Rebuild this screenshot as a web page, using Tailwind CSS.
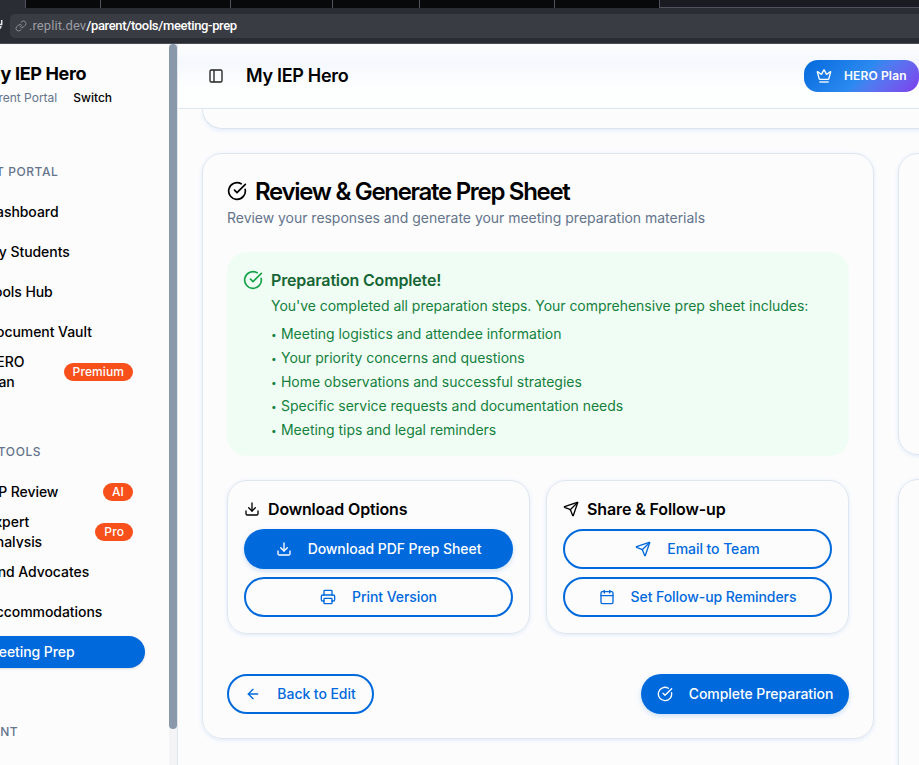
<!DOCTYPE html>
<html lang="en">
<head>
<meta charset="utf-8">
<title>My IEP Hero</title>
<script src="https://cdn.jsdelivr.net/npm/@tailwindcss/browser@4"></script>
</head>
<body class="w-[919px] h-[765px] overflow-hidden flex flex-col bg-[#fcfcfd] text-black font-['Inter',sans-serif] text-sm tracking-[-0.03px]">
<svg class="hidden">
  <defs>
    <symbol id="check" viewBox="0 0 24 24"><path d="M21.801 10A10 10 0 1 1 17 3.335"/><path d="m9 11 3 3L22 4"/></symbol>
    <symbol id="download" viewBox="0 0 24 24"><path d="M21 15v4a2 2 0 0 1-2 2H5a2 2 0 0 1-2-2v-4"/><path d="m7 10 5 5 5-5"/><path d="M12 15V3"/></symbol>
    <symbol id="send" viewBox="0 0 24 24"><path d="M14.536 21.686a.5.5 0 0 0 .937-.024l6.5-19a.496.496 0 0 0-.635-.635l-19 6.5a.5.5 0 0 0-.024.937l7.93 3.18a2 2 0 0 1 1.112 1.11z"/><path d="m21.854 2.147-10.94 10.939"/></symbol>
    <symbol id="printer" viewBox="0 0 24 24"><path d="M6 18H4a2 2 0 0 1-2-2v-5a2 2 0 0 1 2-2h16a2 2 0 0 1 2 2v5a2 2 0 0 1-2 2h-2"/><path d="M6 9V3a1 1 0 0 1 1-1h10a1 1 0 0 1 1 1v6"/><rect x="6" y="14" width="12" height="8" rx="1"/></symbol>
    <symbol id="calendar" viewBox="0 0 24 24"><path d="M8 2v4"/><path d="M16 2v4"/><rect width="18" height="18" x="3" y="4" rx="2"/><path d="M3 10h18"/></symbol>
    <symbol id="arrow" viewBox="0 0 24 24"><path d="m12 19-7-7 7-7"/><path d="M19 12H5"/></symbol>
    <symbol id="crown" viewBox="0 0 24 24"><path d="M11.562 3.266a.5.5 0 0 1 .876 0L15.39 8.87a1 1 0 0 0 1.516.294L21.183 5.5a.5.5 0 0 1 .798.519l-2.834 10.246a1 1 0 0 1-.956.734H5.81a1 1 0 0 1-.957-.734L2.02 6.02a.5.5 0 0 1 .798-.519l4.276 3.664a1 1 0 0 0 1.516-.294z"/><path d="M5 21h14"/></symbol>
    <symbol id="panel" viewBox="0 0 24 24"><rect width="18" height="18" x="3" y="3" rx="2"/><path d="M9 3v18"/></symbol>
    <symbol id="link" viewBox="0 0 24 24"><path d="M10 13a5 5 0 0 0 7.54.54l3-3a5 5 0 0 0-7.07-7.07l-1.72 1.71"/><path d="M14 11a5 5 0 0 0-7.54-.54l-3 3a5 5 0 0 0 7.07 7.07l1.71-1.71"/></symbol>
  </defs>
</svg>

<!-- Browser chrome -->
<div class="h-11 shrink-0 flex flex-col bg-[#2b2d35] border-b border-[#4a4c58]">
  <div class="h-2 shrink-0 flex">
    <div class="w-[25px]"></div>
    <div class="w-[75px] bg-[#08090b] border-l border-[#50525e]"></div>
    <div class="w-[130px] bg-[#08090b] border-l border-[#50525e]"></div>
    <div class="w-[102px] bg-[#08090b] border-l border-[#50525e]"></div>
    <div class="w-[87px] bg-[#08090b] border-l border-[#50525e]"></div>
    <div class="w-[135px] bg-[#08090b] border-l border-[#50525e]"></div>
    <div class="w-[105px] bg-[#08090b] border-l border-[#50525e]"></div>
    <div class="flex-1 bg-[#1a1b20] border-l border-b border-[#50525e]"></div>
  </div>
  <div class="flex items-center pt-[6px]">
    <svg class="w-[10px] h-6 shrink-0" viewBox="0 0 10 24" fill="none" stroke="#e4e5e9" stroke-width="1.5"><path d="M1.700 6v4.500h-4"/><path d="M1 12c0 1.500-1 2.500-3 3.500"/></svg>
    <div class="h-6 flex-1 flex items-center rounded-l-[5px] bg-[#3a3c44] pl-[5px] text-white font-['Roboto',sans-serif] text-[13px] whitespace-nowrap">
      <svg class="size-3 mr-[2px]" fill="none" stroke="#8b8d95" stroke-width="2" stroke-linecap="round"><use href="#link"/></svg>
      <span class="text-[#9a9ca3] tracking-[0.08px]">.replit.dev</span><span class="font-medium tracking-[-0.34px]">/parent/tools/meeting-prep</span>
    </div>
  </div>
</div>

<div class="flex-1 flex min-h-0">
  <!-- Sidebar -->
  <aside class="w-[178px] shrink-0 flex border-r border-[#e1e6ee] overflow-hidden whitespace-nowrap font-medium tracking-[-0.06px]">
    <div class="w-[169px] shrink-0 overflow-hidden">
      <div class="-ml-4 pt-4 h-[104px]">
        <div class="text-lg leading-7 font-bold tracking-[-0.36px]">My IEP Hero</div>
        <div class="flex gap-4 text-xs leading-5 tracking-[0]"><span class="text-[#64748b] font-normal">Parent Portal</span><span>Switch</span></div>
      </div>
      <div class="h-12 -ml-[46px] text-xs tracking-[0.55px] text-[#64748b] leading-[48px]">PARENT PORTAL</div>
      <nav class="flex flex-col gap-2 pr-9 leading-5 -ml-3.5">
        <div class="h-8 flex items-center">Dashboard</div>
        <div class="h-8 flex items-center">My Students</div>
        <div class="h-8 flex items-center">Tools Hub</div>
        <div class="h-8 flex items-center">Document Vault</div>
        <div class="h-8 flex items-center justify-between"><span>HERO<br>Plan</span><span class="h-[18px] px-[9px] rounded-full bg-[#f8501b] text-white text-xs leading-[18px] tracking-[0.1px]">Premium</span></div>
      </nav>
      <div class="h-12 mt-10 -ml-[26px] text-xs tracking-[0.6px] text-[#64748b] leading-[48px]">IEP TOOLS</div>
      <nav class="flex flex-col gap-2 pr-9 leading-5 -ml-3.5">
        <div class="h-8 flex items-center justify-between"><span>IEP Review</span><span class="h-[18px] px-[9px] rounded-full bg-[#f8501b] text-white text-xs leading-[18px] tracking-[0.1px]">AI</span></div>
        <div class="h-8 flex items-center justify-between overflow-hidden"><span>Expert<br>Analysis</span><span class="h-[18px] px-[9px] rounded-full bg-[#f8501b] text-white text-xs leading-[18px] tracking-[0.1px]">Pro</span></div>
        <div class="h-8 flex items-center">Find Advocates</div>
        <div class="h-8 flex items-center">Accommodations</div>
        <div class="h-8 -mr-3 flex items-center rounded-r-2xl bg-[#0069dc] text-white shadow-sm">Meeting Prep</div>
      </nav>
      <div class="h-12 mt-10 -ml-[46px] text-xs tracking-[0.5px] text-[#64748b] leading-[48px]">ACCOUNT</div>
    </div>
    <div class="w-2 bg-[#f4f4f7]"><div class="h-[685px] rounded-full bg-[#8999aa]"></div></div>
  </aside>

  <!-- Main -->
  <main class="flex-1 min-w-0 flex flex-col overflow-hidden">
    <header class="h-[65px] shrink-0 flex items-center border-b border-[#dfe6ee] pl-[30px] bg-linear-to-b from-[#fcfdfe] via-[#f5f8fd] via-30% to-[#fdfefe] to-65%">
      <svg class="size-4" fill="none" stroke="#222" stroke-width="2"><use href="#panel"/></svg>
      <h1 class="ml-[22px] text-lg font-semibold tracking-[-0.3px]">My IEP Hero</h1>
      <div class="ml-auto h-8 w-[115px] shrink-0 rounded-[14px] flex items-center gap-3 pl-3 text-white text-xs font-semibold tracking-[0.14px] whitespace-nowrap bg-linear-135 from-[#0069dc] via-[#2b8af0] to-[#7c3aed]"><svg class="size-4 shrink-0" fill="none" stroke="currentColor" stroke-width="2" stroke-linejoin="round"><use href="#crown"/></svg>HERO Plan</div>
    </header>

    <div class="pl-6 flex flex-col gap-6">
      <div class="h-5 -mr-6 rounded-bl-[20px] border-l border-b border-[#dce5ef] shadow-[0_2px_4px_rgba(0,105,220,0.09)]"></div>
      <div class="flex gap-6 items-start">
        <section class="w-[672px] h-[586px] shrink-0 rounded-[20px] border border-[#dfe6ef] p-6 shadow-[0_1px_4px_rgba(0,105,220,0.12)]">
          <h2 class="flex items-center gap-2 text-2xl leading-6 font-semibold tracking-[-1.3px]"><svg class="size-5" fill="none" stroke="currentColor" stroke-width="2" stroke-linecap="round" stroke-linejoin="round"><use href="#check"/></svg><span class="pt-0.5">Review &amp; Generate Prep Sheet</span></h2>
          <p class="mt-1 leading-5 text-[#64748b]">Review your responses and generate your meeting preparation materials</p>

          <div class="mt-6 h-[204px] rounded-[20px] bg-[#f0fdf4] p-4 flex gap-2 text-[#15803d]">
            <svg class="size-5 mt-0.5 shrink-0" fill="none" stroke="#16a34a" stroke-width="2" stroke-linecap="round" stroke-linejoin="round"><use href="#check"/></svg>
            <div>
              <h3 class="text-base font-semibold text-[#166534] tracking-[-0.16px]">Preparation Complete!</h3>
              <p class="mt-1 leading-5">You've completed all preparation steps. Your comprehensive prep sheet includes:</p>
              <ul class="mt-2 flex flex-col gap-1 leading-5">
                <li class="flex"><span class="w-[10px] text-[10px]">•</span>Meeting logistics and attendee information</li>
                <li class="flex"><span class="w-[10px] text-[10px]">•</span>Your priority concerns and questions</li>
                <li class="flex"><span class="w-[10px] text-[10px]">•</span>Home observations and successful strategies</li>
                <li class="flex"><span class="w-[10px] text-[10px]">•</span>Specific service requests and documentation needs</li>
                <li class="flex"><span class="w-[10px] text-[10px]">•</span>Meeting tips and legal reminders</li>
              </ul>
            </div>
          </div>

          <div class="mt-6 grid grid-cols-2 gap-4 font-medium tracking-[-0.07px]">
            <div class="rounded-[20px] border border-[#dfe6ef] p-4 flex flex-col gap-2 shadow-[0_1px_4px_rgba(0,105,220,0.12)]">
              <h3 class="flex items-center gap-2 text-base font-semibold tracking-[-0.17px]"><svg class="size-4" fill="none" stroke="currentColor" stroke-width="2" stroke-linecap="round" stroke-linejoin="round"><use href="#download"/></svg>Download Options</h3>
              <button class="h-10 rounded-[20px] flex items-center justify-center gap-4 bg-[#0069dc] text-white shadow-[0_2px_5px_rgba(0,105,220,0.2)]"><svg class="size-4" fill="none" stroke="currentColor" stroke-width="2" stroke-linecap="round" stroke-linejoin="round"><use href="#download"/></svg>Download PDF Prep Sheet</button>
              <button class="h-10 rounded-[20px] flex items-center justify-center gap-4 border-2 border-[#0069dc] text-[#0069dc]"><svg class="size-4" fill="none" stroke="currentColor" stroke-width="2" stroke-linecap="round" stroke-linejoin="round"><use href="#printer"/></svg>Print Version</button>
            </div>
            <div class="rounded-[20px] border border-[#dfe6ef] p-4 flex flex-col gap-2 shadow-[0_1px_4px_rgba(0,105,220,0.12)]">
              <h3 class="flex items-center gap-2 text-base font-semibold tracking-[-0.12px]"><svg class="size-4" fill="none" stroke="currentColor" stroke-width="2" stroke-linecap="round" stroke-linejoin="round"><use href="#send"/></svg>Share &amp; Follow-up</h3>
              <button class="h-10 rounded-[20px] flex items-center justify-center gap-4 border-2 border-[#0069dc] text-[#0069dc]"><svg class="size-4" fill="none" stroke="currentColor" stroke-width="2" stroke-linecap="round" stroke-linejoin="round"><use href="#send"/></svg>Email to Team</button>
              <button class="h-10 rounded-[20px] flex items-center justify-center gap-4 border-2 border-[#0069dc] text-[#0069dc]"><svg class="size-4" fill="none" stroke="currentColor" stroke-width="2" stroke-linecap="round" stroke-linejoin="round"><use href="#calendar"/></svg>Set Follow-up Reminders</button>
            </div>
          </div>

          <div class="mt-10 flex justify-between font-medium tracking-[-0.06px]">
            <button class="h-10 w-[147px] rounded-[20px] flex items-center justify-center gap-4 border-2 border-[#0069dc] text-[#0069dc]"><svg class="size-4" fill="none" stroke="currentColor" stroke-width="2" stroke-linecap="round" stroke-linejoin="round"><use href="#arrow"/></svg>Back to Edit</button>
            <button class="h-10 w-[208px] rounded-[20px] flex items-center justify-center gap-4 bg-[#0069dc] text-white shadow-[0_2px_5px_rgba(0,105,220,0.2)]"><svg class="size-4" fill="none" stroke="currentColor" stroke-width="2" stroke-linecap="round" stroke-linejoin="round"><use href="#check"/></svg>Complete Preparation</button>
          </div>
        </section>
        <div class="w-[300px] shrink-0 flex flex-col gap-6">
          <div class="h-[302px] rounded-[20px] border border-[#dfe6ef] shadow-[0_1px_4px_rgba(0,105,220,0.12)]"></div>
          <div class="h-[320px] rounded-[20px] border border-[#dfe6ef] shadow-[0_1px_4px_rgba(0,105,220,0.12)]"></div>
        </div>
      </div>
    </div>
  </main>
</div>
</body>
</html>
